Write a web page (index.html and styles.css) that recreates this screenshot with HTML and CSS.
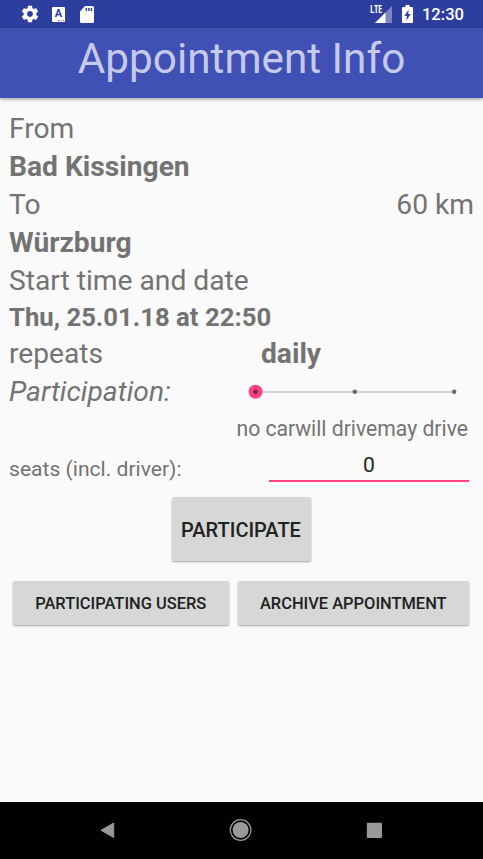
FILE: index.html
```
<!DOCTYPE html>
<html lang="en">
<head>
<meta charset="utf-8">
<title>Appointment Info</title>
<link rel="stylesheet" href="styles.css">
</head>
<body>
<div class="statusbar">
  <svg class="gear" width="20" height="20" viewBox="0 0 24 24"><path fill="#fff" d="M19.43 12.98c.04-.32.07-.64.07-.98s-.03-.66-.07-.98l2.11-1.65c.19-.15.24-.42.12-.64l-2-3.46c-.12-.22-.39-.3-.61-.22l-2.49 1c-.52-.4-1.08-.73-1.69-.98l-.38-2.65C14.46 2.18 14.25 2 14 2h-4c-.25 0-.46.18-.49.42l-.38 2.65c-.61.25-1.17.59-1.69.98l-2.49-1c-.23-.09-.49 0-.61.22l-2 3.46c-.13.22-.07.49.12.64l2.11 1.65c-.04.32-.07.65-.07.98s.03.66.07.98l-2.11 1.65c-.19.15-.24.42-.12.64l2 3.46c.12.22.39.3.61.22l2.49-1c.52.4 1.08.73 1.69.98l.38 2.65c.03.24.24.42.49.42h4c.25 0 .46-.18.49-.42l.38-2.65c.61-.25 1.17-.59 1.69-.98l2.49 1c.23.09.49 0 .61-.22l2-3.46c.12-.22.07-.49-.12-.64l-2.11-1.65zM12 15.5c-1.93 0-3.5-1.57-3.5-3.5s1.57-3.5 3.5-3.5 3.5 1.57 3.5 3.5-1.57 3.5-3.5 3.5z"/></svg>
  <span class="keyboard">A<i class="dots"></i></span>
  <svg class="sd" width="14" height="17" viewBox="0 0 14 17"><path fill="#fff" d="M5 0h7.5A1.5 1.5 0 0 1 14 1.500v14a1.500 1.500 0 0 1-1.500 1.500h-11A1.500 1.500 0 0 1 0 15.500V5.500z"/><path stroke="#303f9f" stroke-width="1.500" d="M6.300 2v3M8.900 2v3M11.400 2v3"/></svg>
  <span class="lte">LTE</span>
  <svg class="signal" width="17" height="17" viewBox="0 0 17 17"><path fill="#7c86c4" d="M17 0v17H0z"/><path fill="#fff" d="M10.500 6.500V17H0z"/></svg>
  <svg class="battery" width="11" height="18" viewBox="0 0 11 18"><path fill="#fff" d="M3.500 0h4v2H10q1 0 1 1v14q0 1-1 1H1q-1 0-1-1V3q0-1 1-1h2.500z"/><path fill="#303f9f" d="M6.800 4.500 2.300 11h2.600l-.7 4.500L8.800 9H6.100z"/></svg>
  <span class="clock">12:30</span>
</div>
<header class="appbar"><h1 class="title">Appointment Info</h1></header>
<main class="content">
  <div class="row">From</div>
  <div class="row strong">Bad Kissingen</div>
  <div class="row split"><span>To</span><span>60 km</span></div>
  <div class="row strong">Würzburg</div>
  <div class="row">Start time and date</div>
  <div class="row date">Thu, 25.01.18 at 22:50</div>
  <div class="row repeat"><span class="repeat-label">repeats</span><span class="strong">daily</span></div>
  <div class="row participation"><span class="italic">Participation:</span>
    <svg class="slider" width="214" height="16" viewBox="0 0 214 16"><path stroke="#d5d5d5" stroke-width="2.200" d="M7 7.800h199"/><circle cx="7.500" cy="7.800" r="7" fill="#ff4081"/><circle cx="7.500" cy="7.800" r="2.300" fill="#801f42"/><circle cx="106.800" cy="7.800" r="2.200" fill="#696969"/><circle cx="206.200" cy="7.800" r="2.200" fill="#696969"/></svg>
  </div>
  <div class="row labels"><span>no car</span><span>will drive</span><span>may drive</span></div>
  <div class="row seats"><span class="seats-label">seats (incl. driver):</span><span class="field">0</span></div>
  <div class="actions"><button class="btn primary">PARTICIPATE</button></div>
  <div class="actions pair"><button class="btn users">PARTICIPATING USERS</button><button class="btn archive">ARCHIVE APPOINTMENT</button></div>
</main>
<nav class="navbar">
  <svg width="483" height="57" viewBox="0 0 483 57"><path fill="#999" stroke="#999" stroke-linejoin="round" d="M101 28.300 113.700 21v14.500z"/><circle cx="240.600" cy="28" r="10.300" fill="none" stroke="#999" stroke-width="1.200"/><circle cx="240.600" cy="28" r="8" fill="#999"/><rect x="366.800" y="20.800" width="15.200" height="15.200" rx="1" fill="#999"/></svg>
</nav>
</body>
</html>
```
FILE: styles.css
```
* { box-sizing: border-box; }
body {
  margin: 0;
  width: 483px;
  height: 859px;
  display: flex;
  flex-direction: column;
  overflow: hidden;
  background: #fafafa;
  color: #737373;
  font-family: Roboto, sans-serif;
}
.statusbar {
  height: 28px;
  flex: none;
  display: flex;
  align-items: center;
  padding: 0 19px 0 20px;
  background: #2e3e9e;
  color: #fff;
}
.keyboard {
  position: relative;
  width: 13px;
  height: 15px;
  margin: 0 15px 0 12px;
  border-radius: 1px;
  background: #fff;
  color: #303f9f;
  font-size: 11px;
  font-weight: 700;
  line-height: 14px;
  text-align: center;
}
.dots {
  position: absolute;
  right: 1px;
  bottom: 1px;
  width: 6px;
  border-bottom: 1px dotted #7c86c4;
}
.lte {
  margin-left: auto;
  align-self: flex-start;
  margin-top: 4px;
  width: 12px;
  font: 700 10.5px/11px "Open Sans", sans-serif;
  letter-spacing: -0.5px;
  transform: scaleX(.72);
  transform-origin: left;
}
.signal { margin-left: -7px; }
.battery { margin: -1px 9px 0 10px; }
.clock { font-size: 16.6px; font-weight: 500; line-height: 28px; padding-top: 1px; }
.appbar {
  height: 70px;
  flex: none;
  background: #4050b5;
  box-shadow: 0 1px 4px rgba(0, 0, 0, .4);
}
.title {
  margin: 0;
  padding-top: 1px;
  text-align: center;
  font-size: 42.3px;
  font-weight: 400;
  line-height: 60px;
  color: #c5cae9;
}
.content { flex: 1; padding: 11.5px 9px 0; }
.row {
  height: 38px;
  display: flex;
  align-items: center;
  font-size: 28.2px;
  line-height: 38px;
  white-space: nowrap;
}
.strong { font-weight: 700; }
.split { justify-content: space-between; }
.date { height: 35.5px; font-size: 25.7px; font-weight: 700; }
.repeat { height: 37px; }
.repeat-label { width: 252px; }
.participation { height: 39px; justify-content: space-between; padding-right: 12px; }
.italic { font-style: italic; }
.slider { display: block; }
.labels { height: 36px; justify-content: flex-end; padding-right: 6px; font-size: 21.15px; }
.seats {
  height: 42px;
  justify-content: space-between;
  padding-right: 5px;
  font-size: 21.1px;
}
.seats-label { padding-top: 1px; }
.field {
  width: 200px;
  height: 28px;
  margin-top: -1px;
  border-bottom: 2px solid #ff4081;
  color: #212121;
  line-height: 21px;
  text-align: center;
}
.actions { display: flex; justify-content: center; padding-top: 8px; }
.pair { justify-content: flex-start; gap: 9px; padding: 20px 0 0 4px; }
.btn {
  height: 44px;
  padding: 1px 0 0;
  border: 0;
  border-radius: 2px;
  background: #d6d7d7;
  box-shadow: 0 1px 2px rgba(0, 0, 0, .35);
  color: #212121;
  font: 500 16.45px/43px Roboto, sans-serif;
  white-space: nowrap;
}
.primary { width: 139px; height: 64px; margin-right: 1px; font-size: 20px; line-height: 64px; }
.users { width: 215.500px; }
.archive { width: 231.500px; }
.navbar { height: 57px; flex: none; background: #000; }
.navbar svg { display: block; }
```
